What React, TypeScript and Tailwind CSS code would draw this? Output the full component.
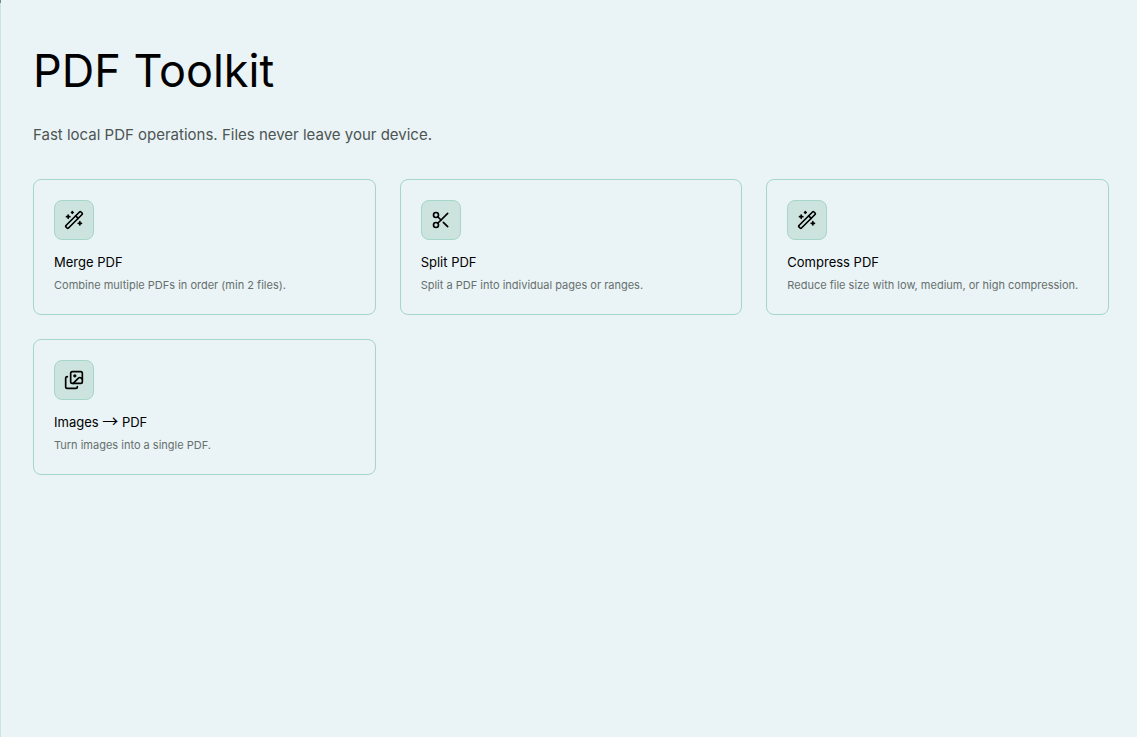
import { Images, Scissors, WandSparkles } from "lucide-react";

const tools = [
  {
    id: "merge",
    icon: WandSparkles,
    title: "Merge PDF",
    description: "Combine multiple PDFs in order (min 2 files).",
  },
  {
    id: "split",
    icon: Scissors,
    title: "Split PDF",
    description: "Split a PDF into individual pages or ranges.",
  },
  {
    id: "compress",
    icon: WandSparkles,
    title: "Compress PDF",
    description: "Reduce file size with low, medium, or high compression.",
  },
  {
    id: "images",
    icon: Images,
    title: (
      <>
        Images{" "}
        <span className="font-['Noto_Sans_CJK_JP',sans-serif] text-base leading-none">
          →
        </span>{" "}
        PDF
      </>
    ),
    description: "Turn images into a single PDF.",
  },
];

export default function App() {
  return (
    <div className="flex min-h-screen bg-[#eaf3f5] font-['Inter',sans-serif] text-black">
      {/* Edge of the collapsed sidebar */}
      <div className="flex w-px shrink-0 flex-col bg-[#cce3de]">
        <div className="h-[3px] bg-[#6b9080]" />
      </div>

      <main className="min-w-0 flex-1 pt-10 pr-7 pb-8 pl-8">
        <h1 className="text-[45px] leading-[62px]">PDF Toolkit</h1>
        <p className="mt-[21px] text-[15px] leading-6 text-[#4c5553]">
          Fast local PDF operations. Files never leave your device.
        </p>

        <div className="mt-8 grid grid-cols-3 gap-6">
          {tools.map(({ id, icon: Icon, title, description }) => (
            <button
              key={id}
              type="button"
              className="cursor-pointer rounded-lg border border-[#a4d6c9] p-5 text-left"
            >
              <div className="flex h-10 w-10 items-center justify-center rounded-lg border border-[#a4d6c9] bg-[#cce3de]">
                <Icon className="h-5 w-5" />
              </div>
              <h2 className="mt-3 text-[13px] leading-5">{title}</h2>
              <p className="mt-1 text-[11px] leading-[18px] text-[#66706e]">
                {description}
              </p>
            </button>
          ))}
        </div>
      </main>
    </div>
  );
}
